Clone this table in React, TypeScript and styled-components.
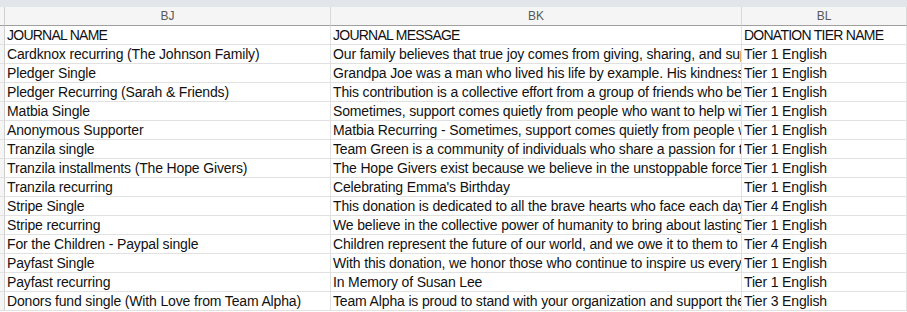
import styled, { createGlobalStyle } from "styled-components";

const GlobalStyle = createGlobalStyle`
  html, body {
    margin: 0;
    padding: 0;
    background: #ffffff;
  }
  body {
    font-family: "Liberation Sans", Arial, sans-serif;
  }
`

type Row = { name: string; message: string; tier: string }

const titles: Row = { name: 'JOURNAL NAME', message: 'JOURNAL MESSAGE', tier: 'DONATION TIER NAME' }

const rows: Row[] = [
  { name: 'Cardknox recurring (The Johnson Family)', message: 'Our family believes that true joy comes from giving, sharing, and supporting one another.', tier: 'Tier 1 English' },
  { name: 'Pledger Single', message: 'Grandpa Joe was a man who lived his life by example. His kindness and generosity', tier: 'Tier 1 English' },
  { name: 'Pledger Recurring (Sarah & Friends)', message: 'This contribution is a collective effort from a group of friends who believe', tier: 'Tier 1 English' },
  { name: 'Matbia Single', message: 'Sometimes, support comes quietly from people who want to help without', tier: 'Tier 1 English' },
  { name: 'Anonymous Supporter', message: 'Matbia Recurring - Sometimes, support comes quietly from people who want', tier: 'Tier 1 English' },
  { name: 'Tranzila single', message: 'Team Green is a community of individuals who share a passion for the planet', tier: 'Tier 1 English' },
  { name: 'Tranzila installments (The Hope Givers)', message: 'The Hope Givers exist because we believe in the unstoppable force of hope', tier: 'Tier 1 English' },
  { name: 'Tranzila recurring', message: "Celebrating Emma's Birthday", tier: 'Tier 1 English' },
  { name: 'Stripe Single', message: 'This donation is dedicated to all the brave hearts who face each day', tier: 'Tier 4 English' },
  { name: 'Stripe recurring', message: 'We believe in the collective power of humanity to bring about lasting change', tier: 'Tier 1 English' },
  { name: 'For the Children - Paypal single', message: 'Children represent the future of our world, and we owe it to them to', tier: 'Tier 4 English' },
  { name: 'Payfast Single', message: 'With this donation, we honor those who continue to inspire us every day', tier: 'Tier 1 English' },
  { name: 'Payfast recurring', message: 'In Memory of Susan Lee', tier: 'Tier 1 English' },
  { name: 'Donors fund single (With Love from Team Alpha)', message: 'Team Alpha is proud to stand with your organization and support the cause', tier: 'Tier 3 English' },
]

const Sheet = styled.div`
  width: 907px;
  height: 312px;
  overflow: hidden;
  display: flex;
  flex-direction: column;
`

const TopStrip = styled.div`
  height: 7px;
  background: #e2e6eb;
  flex-shrink: 0;
`

const Grid = styled.div`
  display: grid;
  grid-template-columns: 5px 326px 411px 1fr;
  grid-auto-rows: 19px;
`

const ColumnHead = styled.div`
  background: #f5f5f5;
  border-right: 1px solid #dadada;
  border-bottom: 1px solid #9f9f9f;
  color: #595959;
  font-size: 12px;
  line-height: 18px;
  text-align: center;
`

const Corner = styled(ColumnHead)`
  border-right: 1px solid #d0d0d0;
`

const RowHead = styled.div`
  background: #f5f5f5;
  border-right: 1px solid #d0d0d0;
  border-bottom: 1px solid #e1e1e1;
`

// caps in the title row run narrower than body text
const Cell = styled.div<{ $title?: boolean }>`
  border-right: 1px solid #e1e1e1;
  border-bottom: 1px solid #e1e1e1;
  padding: 1px 0 0 2px;
  color: #111111;
  font-size: 14px;
  line-height: 17px;
  letter-spacing: ${p => (p.$title ? '-0.75px' : '-0.15px')};
  white-space: nowrap;
  overflow: hidden;
`

function SheetRow({ row, title }: { row: Row; title?: boolean }) {
  return (
    <>
      <RowHead />
      <Cell $title={title}>{row.name}</Cell>
      <Cell $title={title}>{row.message}</Cell>
      <Cell $title={title}>{row.tier}</Cell>
    </>
  )
}

export default function App() {
  return (
    <Sheet>
      <GlobalStyle />
      <TopStrip />
      <Grid>
        <Corner />
        <ColumnHead>BJ</ColumnHead>
        <ColumnHead>BK</ColumnHead>
        <ColumnHead>BL</ColumnHead>
        <SheetRow row={titles} title />
        {rows.map((row, i) => (
          <SheetRow key={i} row={row} />
        ))}
      </Grid>
    </Sheet>
  )
}
